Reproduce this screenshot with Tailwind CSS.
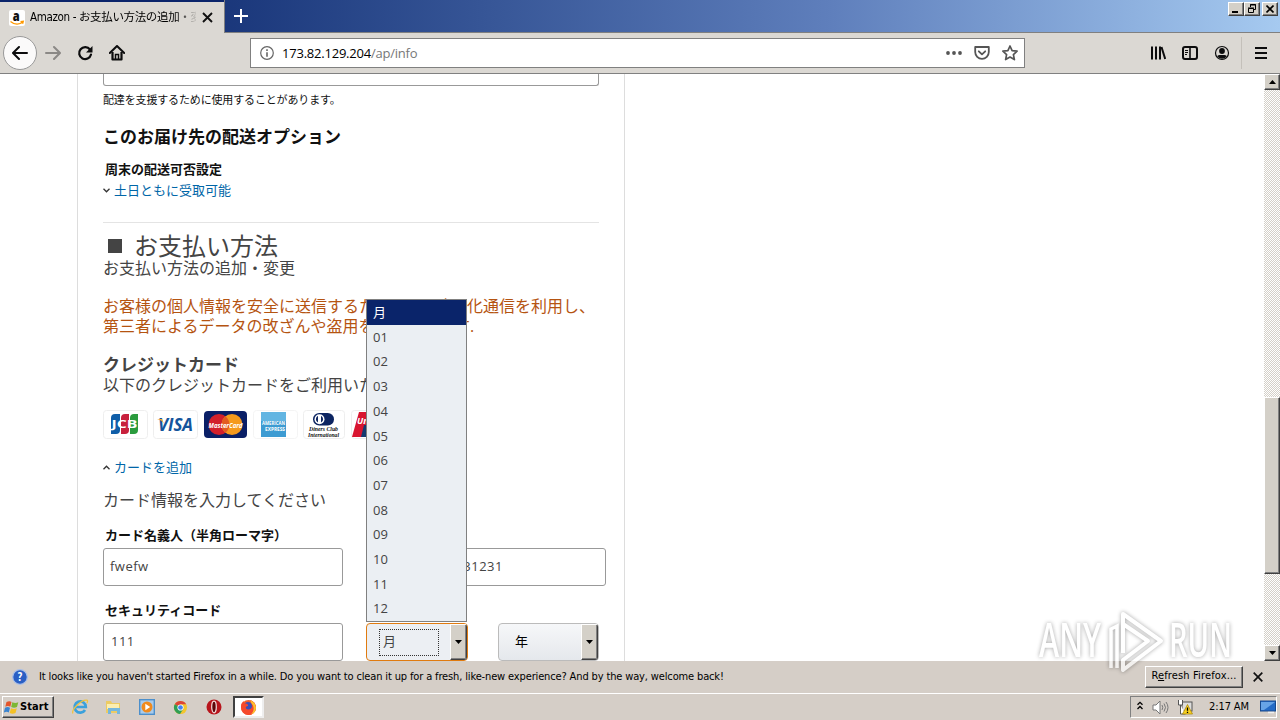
<!DOCTYPE html>
<html lang="ja">
<head>
    <meta charset="UTF-8">
    <meta name="viewport" content="width=device-width, initial-scale=1.0">
    <title>Amazon - お支払い方法の追加・変更</title>
    <script src="https://cdn.jsdelivr.net/npm/@tailwindcss/browser@4"></script>
    <style>
        body {
            font-family: 'Open Sans', 'Noto Sans CJK JP', sans-serif;
        }
        .tahoma {
            font-family: 'DejaVu Sans Condensed', 'DejaVu Sans', 'Noto Sans CJK JP', sans-serif;
            font-stretch: condensed;
        }
        .raised {
            border: 1px solid;
            border-color: #fff #404040 #404040 #fff;
            box-shadow: inset -1px -1px 0 #808080;
        }
        .dither {
            background: repeating-conic-gradient(#d4d0c8 0 25%, #fff 0 50%) 0 0 / 2px 2px;
        }
    </style>
</head>
<body class="w-[1280px] h-[720px] overflow-hidden bg-white text-[#444] flex flex-col whitespace-nowrap">

    <!-- Tab strip -->
    <header class="h-[33px] shrink-0 flex items-start bg-linear-to-r from-[#0a246a] from-5% via-[#5f7fbc] via-65% to-[#a6caf0]">
        <div class="tahoma w-[224px] h-[33px] border-t-2 border-[#0a246a] bg-[#dbd8d3] flex items-center pl-[9px] text-black text-[11.5px]">
            <svg class="size-4 shrink-0" viewBox="0 0 16 16">
                <rect width="16" height="16" rx="2" fill="#fff"/>
                <text x="3.7" y="10.5" font-family="Open Sans" font-weight="800" font-size="14" fill="#111">a</text>
                <path d="M1.5 11.5c4 3.300 9 3.200 12.500.6M11.500 11.600l2.800-.3-.7 2.500" fill="none" stroke="#f90" stroke-width="1.300"/>
            </svg>
            <span class="ml-[5px] w-[166px] overflow-hidden bg-linear-to-r from-black from-88% to-black/10 bg-clip-text text-transparent tracking-[-0.35px]">Amazon - お支払い方法の追加・変更</span>
            <svg class="ml-[6px] size-[11px] shrink-0" viewBox="0 0 11 11"><path d="M1 1l9 9M10 1l-9 9" stroke="#111" stroke-width="1.900"/></svg>
        </div>
        <div class="flex-1 h-[33px] border-l border-b border-[#808080] flex items-start">
            <svg class="mt-[9px] ml-[9px] size-[14px]" viewBox="0 0 14 14"><path d="M7 0v14M0 7h14" stroke="#fff" stroke-width="2"/></svg>
            <div class="ml-auto mt-[2px] mr-[2px] flex">
                <div class="raised w-4 h-[14px] bg-[#d4d0c8] flex items-end justify-center pb-[2px]"><div class="w-[6px] h-[2px] bg-black mr-[2px]"></div></div>
                <div class="raised w-4 h-[14px] bg-[#d4d0c8] flex items-center justify-center">
                    <svg class="size-[10px]" viewBox="0 0 10 10" fill="none" stroke="#000"><path d="M3.500 3V.5h5v5H6.500M3 1h6" /><path d="M1.500 4.500h5v4h-5zM1 4h6"/></svg>
                </div>
                <div class="raised ml-[2px] w-4 h-[14px] bg-[#d4d0c8] flex items-center justify-center">
                    <svg class="size-2" viewBox="0 0 8 8"><path d="M.5.5l7 7M7.500.5l-7 7" stroke="#000" stroke-width="1.600"/></svg>
                </div>
            </div>
        </div>
    </header>

    <!-- Navigation bar -->
    <nav class="h-[41px] shrink-0 bg-[#dbd8d3] border-b border-[#808080] flex items-center">
        <div class="ml-[3px] size-[34px] rounded-full bg-[#fbfafa] border border-[#999] flex items-center justify-center">
            <svg class="size-4" viewBox="0 0 16 16" fill="none" stroke="#0c0c0d" stroke-width="2" stroke-linecap="round" stroke-linejoin="round"><path d="M15 8H1.500M7 2L1 8l6 6"/></svg>
        </div>
        <svg class="ml-2 size-4" viewBox="0 0 16 16" fill="none" stroke="#8b8986" stroke-width="2" stroke-linecap="round" stroke-linejoin="round"><path d="M1 8h13.500M9 2l6 6-6 6"/></svg>
        <svg class="ml-4 size-4" viewBox="0 0 16 16"><path d="M13 4.500A6 6 0 1 0 14 9.500" fill="none" stroke="#0c0c0d" stroke-width="2.200" stroke-linecap="round"/><path d="M15.500 1v6.500H9z" fill="#0c0c0d"/></svg>
        <svg class="ml-4 size-4" viewBox="0 0 16 16"><path d="M.8 8L8 1l7.200 7" fill="none" stroke="#0c0c0d" stroke-width="2" stroke-linecap="round" stroke-linejoin="round"/><path d="M3.500 7v7.500h9V7" fill="none" stroke="#0c0c0d" stroke-width="2.200" stroke-linejoin="round"/><path d="M6.500 14V9.500h3V14" fill="none" stroke="#0c0c0d" stroke-width="1.500"/></svg>

        <div class="ml-[125px] w-[775px] h-[30px] bg-white border border-[#808080] flex items-center text-[13px] text-[#777]">
            <svg class="ml-[9px] size-[14px]" viewBox="0 0 14 14"><circle cx="7" cy="7" r="6.300" fill="none" stroke="#666" stroke-width="1.200"/><path d="M7 6.200v4.500M7 3.200v1.700" stroke="#666" stroke-width="1.600"/></svg>
            <span class="ml-2 pt-px tracking-[-0.22px]"><span class="text-black">173.82.129.204</span>/ap/info</span>
            <svg class="ml-auto w-4 h-4" viewBox="0 0 16 16" fill="#555"><circle cx="2" cy="8" r="1.900"/><circle cx="8" cy="8" r="1.900"/><circle cx="14" cy="8" r="1.900"/></svg>
            <svg class="ml-3 size-4" viewBox="0 0 16 16" fill="none" stroke="#555" stroke-width="1.800" stroke-linejoin="round" stroke-linecap="round"><path d="M1.200 2h13.600v5a6.800 6.800 0 0 1-13.600 0z"/><path d="M4.800 6.300L8 9.400l3.200-3.100"/></svg>
            <svg class="ml-3 mr-[6px] size-4" viewBox="0 0 16 16" fill="none" stroke="#555" stroke-width="1.700" stroke-linejoin="round"><path d="M8 1l2.100 4.600 5 .6-3.700 3.400 1 5L8 12.100l-4.400 2.500 1-5L.9 6.200l5-.6z"/></svg>
        </div>

        <svg class="ml-[125px] size-4" viewBox="0 0 16 16" stroke="#0c0c0d" stroke-width="2"><path d="M2 1.500v13M6 1.500v13M10 1.500v13" /><path d="M11.500 2l3.700 12"/></svg>
        <svg class="ml-4 size-4" viewBox="0 0 16 16" fill="none" stroke="#0c0c0d"><rect x="1" y="2" width="14" height="12" rx="2" stroke-width="2"/><path d="M8 2v12" stroke-width="1.600"/><path d="M3 5.500h3M3 7.500h3M3 9.500h2"/></svg>
        <svg class="ml-4 size-4" viewBox="0 0 16 16"><circle cx="8" cy="8" r="6.500" fill="none" stroke="#0c0c0d" stroke-width="1.200"/><circle cx="8" cy="6" r="2.900" fill="#0c0c0d"/><path d="M3.200 11.200c1-1.500 2.300-1.300 4.800-1.300s3.800-.2 4.800 1.300A6 6 0 0 1 8 13.800a6 6 0 0 1-4.800-2.600z" fill="#0c0c0d"/></svg>
        <div class="ml-[11px] w-px h-[32px] bg-[#c4c0ba]"></div>
        <svg class="ml-[13px] w-[12px] h-[14px]" viewBox="0 0 12 14"><path d="M0 2h12M0 7h12M0 12h12" stroke="#0c0c0d" stroke-width="2"/></svg>
    </nav>

    <!-- Page -->
    <main class="relative h-[587px] shrink-0 flex overflow-hidden bg-white">
        <div class="ml-[77px] w-[548px] h-full border-x border-[#ddd] pl-[25px] flex flex-col">
            <div class="w-[496px] h-3 shrink-0 border border-t-0 border-[#999] rounded-b-[3px]"></div>
            <p class="h-7 leading-7 text-[11px] text-[#111] tracking-[-0.15px]">配達を支援するために使用することがあります。</p>
            <h2 class="h-11 leading-[46px] text-[17px] font-bold text-[#111]">このお届け先の配送オプション</h2>
            <h3 class="h-[22px] leading-[22px] pl-[2px] text-[13px] font-bold text-[#111]">周末の配送可否設定</h3>
            <div class="h-5 flex items-center text-[13px] text-[#0066a8]">
                <svg class="w-[7px] h-[5px] mr-1" viewBox="0 0 7 5"><path d="M.5.8l3 3 3-3" fill="none" stroke="#333" stroke-width="1.300"/></svg>
                <span class="pt-px">土日ともに受取可能</span>
            </div>
            <div class="mt-[22px] w-[496px] h-px shrink-0 bg-[#e4e4e4]"></div>

            <h1 class="mt-[10px] h-[26px] flex items-center text-[24px]">
                <span class="ml-[5px] mr-3 size-[14px] bg-[#444]"></span>
                <span>お支払い方法</span>
            </h1>
            <p class="h-[18px] leading-[18px] text-base">お支払い方法の追加・変更</p>

            <p class="mt-[19px] h-10 leading-5 text-base text-[#b55411]">お客様の個人情報を安全に送信するために<span class="tracking-[0.7px]">SSL</span>暗号化通信を利用し、<br>第三者によるデータの改ざんや盗用を防いでいます.</p>

            <h2 class="mt-[18px] h-5 leading-[22px] text-[17px] font-bold">クレジットカード</h2>
            <p class="h-[22px] leading-[22px] text-base">以下のクレジットカードをご利用いただけます</p>

            <!-- Card brands -->
            <div class="mt-[14px] h-[29px] shrink-0 flex gap-[5px]">
                <svg class="w-[45px] h-[29px]" viewBox="0 0 45 29">
                    <rect x=".5" y=".5" width="44" height="28" rx="3" fill="#fff" stroke="#eee"/>
                    <path d="M12 4h5v16q0 4-4 4H8V8q0-4 4-4z" fill="#0f5ea8"/><path d="M22 4h4v16q0 4-4 4h-4V8q0-4 4-4z" fill="#c8203c"/><path d="M31 4h4v16q0 4-4 4h-4V8q0-4 4-4z" fill="#2a9b3d"/>
                    <text x="8.500" y="18" textLength="26" lengthAdjust="spacingAndGlyphs" font-family="Open Sans" font-weight="700" font-size="10" fill="#fff">JCB</text>
                </svg>
                <svg class="w-[45px] h-[29px]" viewBox="0 0 45 29">
                    <rect x=".5" y=".5" width="44" height="28" rx="3" fill="#fff" stroke="#eee"/>
                    <text x="5" y="21" textLength="35" lengthAdjust="spacingAndGlyphs" font-family="Open Sans" font-style="italic" font-weight="700" font-size="17" fill="#14549c">VISA</text>
                    <path d="M4 9h5l2 5q-2-4-7-5z" fill="#f3a72e"/>
                </svg>
                <svg class="w-[45px] h-[29px]" viewBox="0 0 45 29">
                    <rect x="1" y="1" width="43" height="27" rx="4" fill="#0a1f66"/>
                    <circle cx="16" cy="14.500" r="10.500" fill="#d2202b"/><circle cx="29" cy="14.500" r="10.500" fill="#f59a1d"/>
                    <path d="M22.500 6.300a10.500 10.500 0 0 1 0 16.400 10.500 10.500 0 0 1 0-16.400z" fill="#e35b22"/>
                    <text x="5.500" y="17.500" textLength="34" lengthAdjust="spacingAndGlyphs" font-family="Open Sans" font-style="italic" font-weight="700" font-size="7.500" fill="#fff">MasterCard</text>
                </svg>
                <svg class="w-[45px] h-[29px]" viewBox="0 0 45 29">
                    <rect x=".5" y=".5" width="44" height="28" rx="3" fill="#fff" stroke="#f4f4f4"/>
                    <rect x="8" y="2" width="25" height="25" fill="#3d9bd2"/><rect x="8" y="2" width="25" height="9" fill="#62b5e2"/>
                    <text x="9" y="14.500" textLength="23" lengthAdjust="spacingAndGlyphs" font-family="Open Sans" font-weight="700" font-size="6" fill="#fff">AMERICAN</text>
                    <text x="12" y="20.500" textLength="20" lengthAdjust="spacingAndGlyphs" font-family="Open Sans" font-weight="700" font-size="6" fill="#fff">EXPRESS</text>
                </svg>
                <svg class="w-[43px] h-[29px]" viewBox="0 0 43 29">
                    <rect x=".5" y=".5" width="41" height="28" rx="3" fill="#fff" stroke="#eee"/>
                    <rect x="10" y="3" width="21" height="12.500" rx="6.250" fill="#0c2461"/><circle cx="16.500" cy="9.200" r="5" fill="#fff"/><path d="M15 5.800a3.800 3.800 0 0 0 0 6.800zM18 5.800a3.800 3.800 0 0 1 0 6.800z" fill="#0c2461"/>
                    <text x="6" y="21" textLength="29" lengthAdjust="spacingAndGlyphs" font-family="Liberation Serif" font-style="italic" font-weight="700" font-size="7" fill="#111">Diners Club</text>
                    <text x="5" y="26.500" textLength="31" lengthAdjust="spacingAndGlyphs" font-family="Liberation Serif" font-style="italic" font-weight="700" font-size="7" fill="#111">International</text>
                </svg>
                <svg class="w-[45px] h-[29px]" viewBox="0 0 45 29">
                    <rect x=".5" y=".5" width="44" height="28" rx="3" fill="#fff" stroke="#eee"/>
                    <path d="M8 2h12l-6 25H1z" fill="#d8142f"/><path d="M13 15h20v12H10z" fill="#153a70"/>
                    <text x="6" y="14" font-family="Open Sans" font-style="italic" font-weight="700" font-size="9" fill="#fff">Union</text>
                </svg>
            </div>

            <div class="mt-[18px] h-5 flex items-center text-[13px] text-[#0066a8]">
                <svg class="w-[7px] h-[5px] mr-1" viewBox="0 0 7 5"><path d="M.5 4.200l3-3 3 3" fill="none" stroke="#333" stroke-width="1.300"/></svg>
                <span class="pt-px">カードを追加</span>
            </div>
            <p class="mt-[13px] h-5 leading-5 text-base">カード情報を入力してください</p>

            <p class="mt-[15px] h-5 leading-5 pl-[2px] text-[13px] font-bold text-[#111]">カード名義人（半角ローマ字）</p>
            <div class="mt-[3px] flex gap-[23px] text-[13px] shrink-0">
                <div class="w-[240px] h-[38px] shrink-0 border border-[#999] rounded-[3px] pl-[6px] flex items-center tracking-[0.5px]">fwefw</div>
                <div class="w-[240px] h-[38px] shrink-0 border border-[#999] rounded-[3px] pl-[6px] flex items-center tracking-[0.5px]"><span class="w-[130px] text-right">1231231231231</span></div>
            </div>
            <p class="mt-[14px] h-5 leading-5 pl-[2px] text-[13px] font-bold text-[#111]">セキュリティコード</p>
            <div class="mt-[3px] flex text-[13px] shrink-0">
                <div class="w-[240px] h-[38px] border border-[#999] rounded-[3px] pl-[7px] flex items-center tracking-[0.5px]">111</div>
                <div class="ml-[23px] w-[102px] h-[38px] border border-[#e07b10] rounded-[4px] bg-[#eceff3] flex items-center justify-between overflow-hidden">
                    <span class="ml-3 w-[60px] h-[27px] border border-dotted border-[#333] pl-[3px] flex items-center">月</span>
                    <span class="raised w-[17px] h-full bg-[#d4d0c8] flex items-center justify-center"><svg class="w-[7px] h-1" viewBox="0 0 7 4"><path d="M0 0h7L3.500 4z"/></svg></span>
                </div>
                <div class="ml-[30px] w-[101px] h-[38px] border border-[#bbb] rounded-[4px] bg-linear-to-b from-[#f6f7f9] to-[#e5e8ec] flex items-center justify-between overflow-hidden text-black">
                    <span class="ml-4">年</span>
                    <span class="raised w-[17px] h-full bg-[#d4d0c8] flex items-center justify-center"><svg class="w-[7px] h-1" viewBox="0 0 7 4"><path d="M0 0h7L3.500 4z"/></svg></span>
                </div>
            </div>
        </div>

        <!-- Scrollbar -->
        <div class="dither ml-auto w-4 h-full flex flex-col">
            <div class="raised size-4 bg-[#d4d0c8] flex items-center justify-center"><svg class="w-[7px] h-1" viewBox="0 0 7 4"><path d="M0 4h7L3.500 0z"/></svg></div>
            <div class="raised mt-[307px] h-[177px] bg-[#d4d0c8]"></div>
            <div class="raised mt-auto size-4 bg-[#d4d0c8] flex items-center justify-center"><svg class="w-[7px] h-1" viewBox="0 0 7 4"><path d="M0 0h7L3.500 4z"/></svg></div>
        </div>

        <!-- Open month list -->
        <ul class="absolute left-[366px] top-[225px] w-[101px] h-[323px] border border-[#808080] bg-[#ebeff3] text-[13px] flex flex-col *:flex-1 *:pl-[6px] *:pt-px *:flex *:items-center">
            <li class="bg-[#0a246a] text-white">月</li>
            <li>01</li>
            <li>02</li>
            <li>03</li>
            <li>04</li>
            <li>05</li>
            <li>06</li>
            <li>07</li>
            <li>08</li>
            <li>09</li>
            <li>10</li>
            <li>11</li>
            <li>12</li>
        </ul>
    </main>

    <!-- Notification bar -->
    <div class="tahoma h-[32px] shrink-0 bg-[#d5cec7] flex items-center text-[11px] text-black">
        <svg class="ml-3 size-4" viewBox="0 0 16 16"><circle cx="8" cy="8" r="7.300" fill="#2a5fc4" stroke="#a9bfe8" stroke-width="1.200"/><text x="8" y="12.300" text-anchor="middle" font-family="Open Sans" font-weight="700" font-size="12" fill="#fff">?</text></svg>
        <span class="ml-[11px] w-[690px] tracking-[-0.14px]">It looks like you haven't started Firefox in a while. Do you want to clean it up for a fresh, like-new experience? And by the way, welcome back!</span>
        <div class="raised ml-auto mb-[1px] w-[98px] h-[22px] bg-[#d5cec7] flex items-center justify-center tracking-[0.15px]"><span>R<u>e</u>fresh Firefox...</span></div>
        <svg class="ml-[10px] mr-[17px] size-[10px]" viewBox="0 0 10 10"><path d="M.7.7l8.600 8.600M9.300.7L.7 9.300" stroke="#111" stroke-width="1.700"/></svg>
    </div>

    <!-- Taskbar -->
    <footer class="tahoma h-[27px] shrink-0 border-t border-white bg-[#d5cec7] flex items-center text-[11px] text-black">
        <div class="raised ml-[2px] w-[52px] h-[22px] flex items-center font-bold">
            <svg class="ml-[1px] size-[15px] shrink-0" viewBox="0 0 15 15"><path d="M2.500 2q3-1.500 5 0L6.300 6.700q-2.300-1.500-5 0z" fill="#e3552b"/><path d="M8.300 2.300q3 1.500 6 0L13 7q-3 1.400-5.800 0z" fill="#7db733"/><path d="M1 7.700q2.700-1.500 5 0L4.800 12.500q-2-1.500-5 0z" fill="#3a84d0"/><path d="M7 8.200q3 1.400 5.800 0L11.500 13q-3 1.400-5.800 0z" fill="#f4c125"/></svg>
            <span class="ml-[1px] tracking-[0.1px]">Start</span>
        </div>
        <svg class="ml-[17px] size-[18px]" viewBox="0 0 18 18"><path d="M14 12a5.600 5.600 0 1 1 .8-3H5" fill="none" stroke="#3ba1dc" stroke-width="2.700"/><path d="M2 15.500C-1 12.500 11 1 16 2.200c1 .5.500 2-.2 3" fill="none" stroke="#efc33f" stroke-width="1.300"/></svg>
        <svg class="ml-4 size-[17px]" viewBox="0 0 17 17"><path d="M1 2h5l1 2h8v10H1z" fill="#eccb63"/><path d="M2 5h12v5H2z" fill="#fbeeb0"/><path d="M3 15V9h12v6h-3v-3H6v3z" fill="#75b7dd"/></svg>
        <svg class="ml-[17px] size-4" viewBox="0 0 16 16"><rect x=".7" y=".7" width="14.600" height="14.600" fill="#a8cbec" stroke="#4c8fcb" stroke-width="1.400"/><circle cx="8" cy="8" r="5.500" fill="#f08a1d"/><path d="M6.300 4.800v6.400L11.200 8z" fill="#fff"/></svg>
        <svg class="ml-[18px] size-[15px]" viewBox="0 0 16 16"><circle cx="8" cy="8" r="7" fill="#f3c62e"/><path d="M8 8L1.900 4.500A7 7 0 0 1 14 4.500H8z" fill="#dc4437"/><path d="M1.900 4.500A7 7 0 0 0 7.500 15L11 9.700 8 8z" fill="#2f9e55"/><circle cx="8" cy="8" r="3.300" fill="#fff"/><circle cx="8" cy="8" r="2.500" fill="#4283ef"/></svg>
        <svg class="ml-[18px] size-4" viewBox="0 0 16 16"><ellipse cx="8" cy="8" rx="7.500" ry="7.500" fill="#b8151c"/><ellipse cx="8" cy="8" rx="2.300" ry="5.800" fill="#5c0508" stroke="#f3dede" stroke-width="1.200"/></svg>
        <div class="ml-[11px] w-[31px] h-[22px] bg-white border-2 border-r-[#eee] border-b-[#eee] border-t-[#404040] border-l-[#404040] flex items-center justify-center">
            <svg class="size-[17px]" viewBox="0 0 17 17"><circle cx="8.500" cy="8.500" r="7.500" fill="#f3612c"/><circle cx="8" cy="7.500" r="4.500" fill="#3b4fb8"/><path d="M1 8q0-4 2.500-6 .3 2 2 2.500 3 .5 2.500 2.500-3 .5-2 2.500 2 2 5 0 1.500-1.500.8-4Q10 3 10 1q6 2 6 8a7.500 7.500 0 0 1-15-1z" fill="#f5492c"/><path d="M10 1q6 2.500 6 8-.5 5-5 6.600Q15 11 13 6.500 11 4 10 1z" fill="#fcc22d"/></svg>
        </div>

        <div class="ml-auto mr-[3px] w-[147px] h-[22px] border border-[#808080] border-r-white border-b-white flex items-center">
            <svg class="ml-[6px] mb-1 w-[6px] h-[9px]" viewBox="0 0 6 9"><path d="M.5 3.800L3 1.300l2.500 2.500M.5 8L3 5.500 5.500 8" fill="none" stroke="#000" stroke-width="1.300"/></svg>
            <svg class="ml-[9px] size-[17px]" viewBox="0 0 17 17" fill="none" stroke="#777"><path d="M1 6h3l4-4v13l-4-4H1z" fill="#fff"/><path d="M10 6q1.500 2.500 0 5M12 4.500q3 4 0 8M14 3q4 5.500 0 11"/></svg>
            <svg class="ml-[8px] size-4" viewBox="0 0 16 16"><rect x="5" y="3" width="10" height="9" fill="#ddd" stroke="#555"/><path d="M1.500 1v5h4V1M3.500 6v9h5" fill="#fff" stroke="#555"/><path d="M10.500 5.500l5 9.500h-10z" fill="#f8d021" stroke="#a88300" stroke-width=".7"/><path d="M10.500 8.500v3.300M10.500 12.700v1.200" stroke="#000" stroke-width="1.300"/></svg>
            <span class="ml-[16px] w-[44px] tracking-[-0.1px]">2:17 AM</span>
            <svg class="ml-[7px] w-4 h-[14px]" viewBox="0 0 16 14"><rect x=".5" y="1" width="15" height="10" fill="#246bc6" stroke="#16498d"/><path d="M1 2h14L4 10H1z" fill="#67a4e6"/><path d="M8 12.500h6" stroke="#efefef" stroke-width="1.500"/></svg>
        </div>
    </footer>

    <!-- Watermark -->
    <div class="absolute left-[1036px] top-[606px] w-[200px] h-[70px] opacity-70">
        <svg class="w-[200px] h-[70px] drop-shadow-[0_0_2px_rgba(0,0,0,0.5)]" viewBox="0 0 200 70" fill="none" stroke="#fff">
            <text x="3" y="51" textLength="62" lengthAdjust="spacingAndGlyphs" font-family="Open Sans" font-weight="600" font-size="47" fill="#fff" stroke="none">ANY</text>
            <text x="133" y="51" textLength="63" lengthAdjust="spacingAndGlyphs" font-family="Open Sans" font-weight="600" font-size="47" fill="#fff" stroke="none">RUN</text>
            <path d="M75 62V23l6-3v42" stroke-width="3.500"/>
            <path d="M87 47V8l38 27-38 29V54l25-19-25-17" stroke-width="4" stroke-linejoin="round"/>
        </svg>
    </div>
</body>
</html>
